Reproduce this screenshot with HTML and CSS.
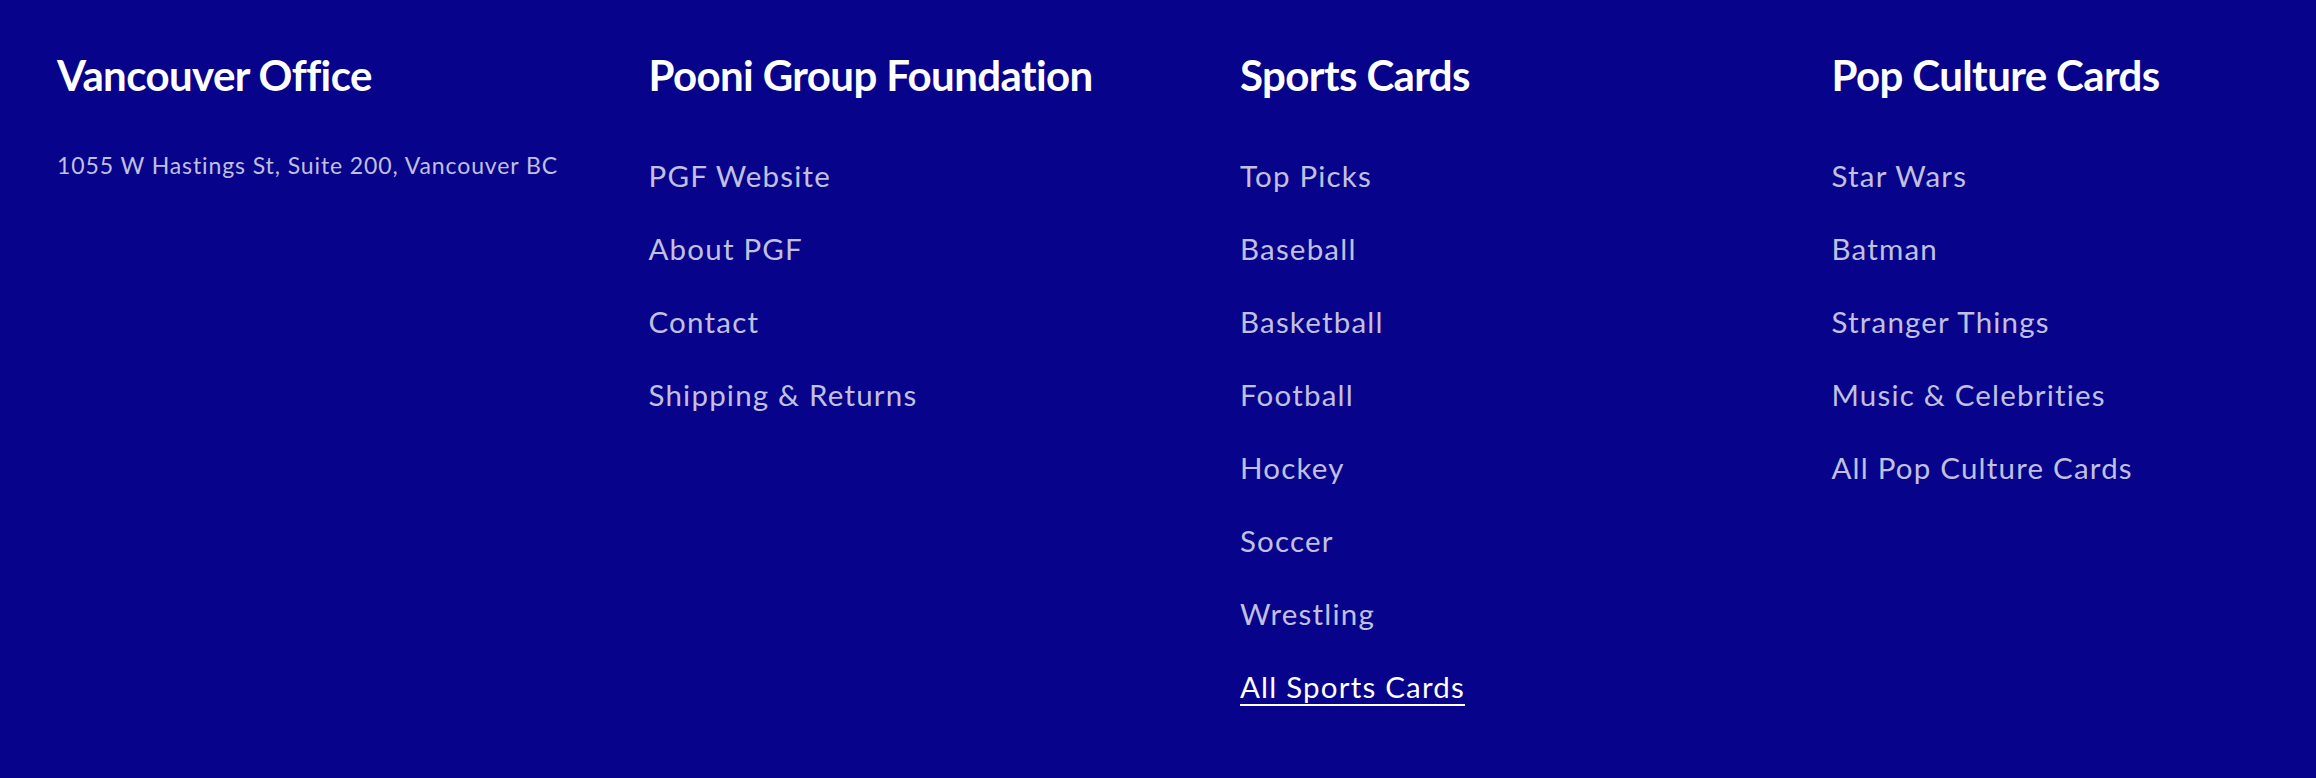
FILE: index.html
```html
<!DOCTYPE html>
<html lang="en">
<head>
    <meta charset="UTF-8">
    <meta name="viewport" content="width=device-width, initial-scale=1.0">
    <title>Footer</title>
    <link rel="stylesheet" href="styles.css">
</head>
<body>
    <footer class="footer">
        <div class="footer-col">
            <h3 class="footer-title">Vancouver Office</h3>
            <p class="footer-address">1055 W Hastings St, Suite 200, Vancouver BC</p>
        </div>

        <div class="footer-col">
            <h3 class="footer-title">Pooni Group Foundation</h3>
            <ul class="footer-links">
                <li><a href="#">PGF Website</a></li>
                <li><a href="#">About PGF</a></li>
                <li><a href="#">Contact</a></li>
                <li><a href="#">Shipping &amp; Returns</a></li>
            </ul>
        </div>

        <div class="footer-col">
            <h3 class="footer-title">Sports Cards</h3>
            <ul class="footer-links">
                <li><a href="#">Top Picks</a></li>
                <li><a href="#">Baseball</a></li>
                <li><a href="#">Basketball</a></li>
                <li><a href="#">Football</a></li>
                <li><a href="#">Hockey</a></li>
                <li><a href="#">Soccer</a></li>
                <li><a href="#">Wrestling</a></li>
                <li><a href="#" class="active">All Sports Cards</a></li>
            </ul>
        </div>

        <div class="footer-col">
            <h3 class="footer-title">Pop Culture Cards</h3>
            <ul class="footer-links">
                <li><a href="#">Star Wars</a></li>
                <li><a href="#">Batman</a></li>
                <li><a href="#">Stranger Things</a></li>
                <li><a href="#">Music &amp; Celebrities</a></li>
                <li><a href="#">All Pop Culture Cards</a></li>
            </ul>
        </div>
    </footer>
</body>
</html>
```

FILE: styles.css
```css
/* Page */
body {
    margin: 0;
    background: #07038a;
    font-family: "Lato", "Open Sans", sans-serif;
    color: white;
}

/* Footer grid */
.footer {
    display: grid;
    grid-template-columns: repeat(4, minmax(0, 1fr));
    column-gap: 164px;
    padding: 50px 57px 60px;
    min-height: 778px;
    box-sizing: border-box;
}

.footer-title {
    margin: 0;
    font-size: 42px;
    line-height: 50px;
    font-weight: 700;
    letter-spacing: -0.6px;
    color: white;
    white-space: nowrap;
}

.footer-address {
    margin: 50px 0 0;
    font-size: 23px;
    line-height: 30px;
    letter-spacing: 0.9px;
    color: rgba(255, 255, 255, 0.75);
    white-space: nowrap;
}

/* Link lists */
.footer-links {
    list-style: none;
    margin: 58px 0 0;
    padding: 0;
    display: flex;
    flex-direction: column;
    gap: 37px;
}

.footer-links li {
    font-size: 29.5px;
    line-height: 36px;
}

.footer-links a {
    letter-spacing: 1.2px;
    color: rgba(255, 255, 255, 0.75);
    text-decoration: none;
    white-space: nowrap;
}

.footer-links a.active {
    color: white;
    text-decoration: underline;
    text-decoration-thickness: 2px;
    text-underline-offset: 6px;
}
```
